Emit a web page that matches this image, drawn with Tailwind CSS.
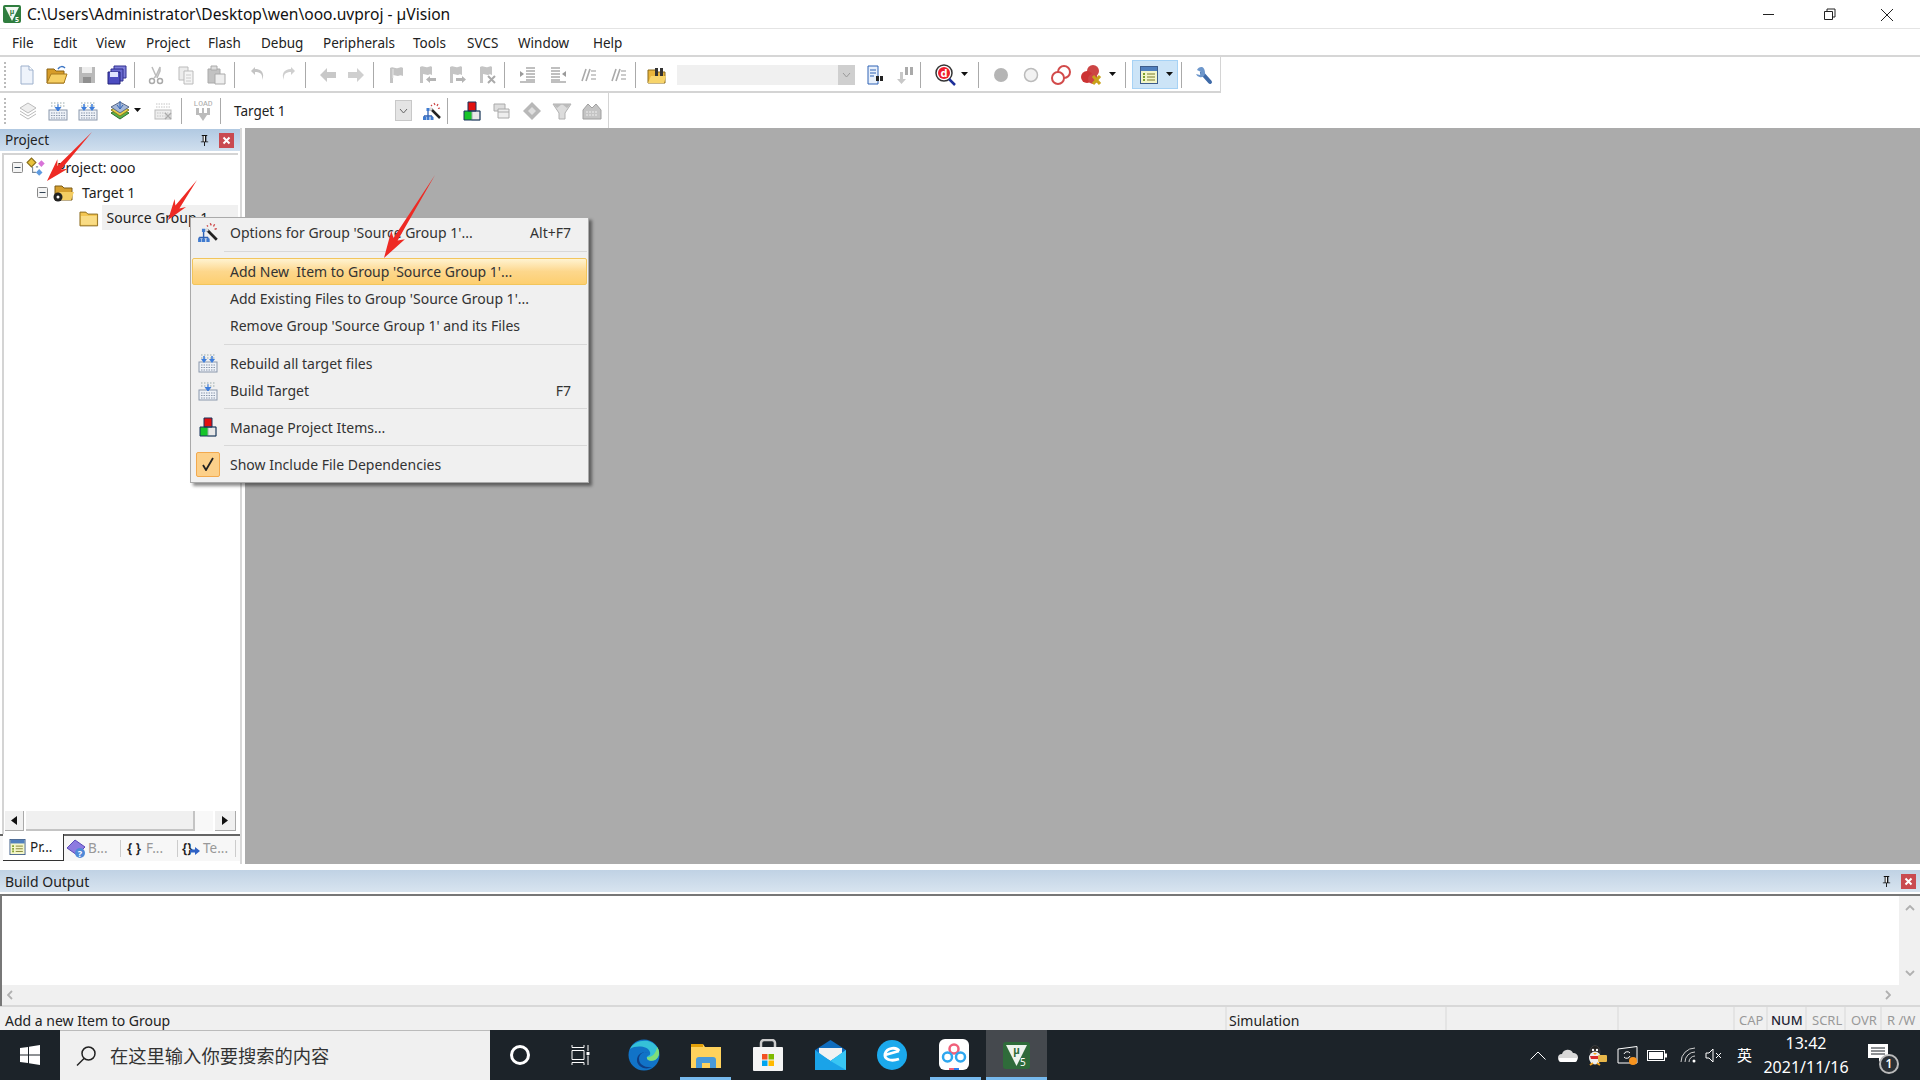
<!DOCTYPE html>
<html lang="en">
<head>
  <meta charset="UTF-8">
  <title>µVision</title>
  <script src="https://cdn.jsdelivr.net/npm/@tailwindcss/browser@4"></script>
</head>
<body class="relative w-[1920px] h-[1080px] overflow-hidden bg-white flex flex-col text-[13.500px] text-[#222] font-['Noto_Sans','Noto_Sans_CJK_SC',sans-serif]">

  <svg class="hidden">
    <symbol id="flag" viewBox="0 0 20 20"><path d="M3 3c3-2 5 1 8 0s4-1 5 0v8c-2-1-3-1-5 0-2 0-3-1-5-1v8H3z" fill="#c4c4c4"/><path d="M6 4v9" stroke="#e6e6e6"/></symbol>
    <symbol id="flagprev" viewBox="0 0 20 20"><path d="M3 2c3-2 5 1 8 0s3-1 4 0v8c-2-1-2-1-4 0-2 0-3-1-5-1v9H3z" fill="#c4c4c4"/><path d="M9 14.500l4-3.500v2h6v3h-6v2z" fill="#b4b4b4"/></symbol>
    <symbol id="flagnext" viewBox="0 0 20 20"><path d="M3 2c3-2 5 1 8 0s3-1 4 0v8c-2-1-2-1-4 0-2 0-3-1-5-1v9H3z" fill="#c4c4c4"/><path d="M19 14.500L15 11v2H9v3h6v2z" fill="#b4b4b4"/></symbol>
    <symbol id="flagclear" viewBox="0 0 20 20"><path d="M3 2c3-2 5 1 8 0s3-1 4 0v8c-2-1-2-1-4 0-2 0-3-1-5-1v9H3z" fill="#c4c4c4"/><path d="M11 11l7 7M18 11l-7 7" stroke="#aaa" stroke-width="2"/></symbol>
    <symbol id="indent" viewBox="0 0 20 20"><path d="M8 3h9M8 6h9M8 9h9M8 12h9M8 15h9M2 17h15" stroke="#aaa" stroke-width="1.300"/><path d="M2 6l4 3-4 3z" fill="#9a9a9a"/></symbol>
    <symbol id="comment" viewBox="0 0 20 20"><path d="M4 16L8 4M8 16L12 4" stroke="#aaa" stroke-width="1.600"/><path d="M13 6h5M13 10h5M13 14h5" stroke="#bbb" stroke-width="1.300"/></symbol>
    <symbol id="build" viewBox="0 0 20 20"><rect x="1" y="9" width="18" height="10" fill="#eef2f8" stroke="#8a97ab"/><path d="M3 12h14M3 14.500h14M3 17h14" stroke="#8a97ab" stroke-dasharray="1.500 1"/><path d="M3 2h14M3 5h14" stroke="#9aa" stroke-dasharray="1.500 1.500"/><path d="M10 3v5m-3-2l3 4 3-4" fill="#3d7ddc" stroke="#3d7ddc"/></symbol>
    <symbol id="rebuild" viewBox="0 0 20 20"><rect x="1" y="9" width="18" height="10" fill="#eef2f8" stroke="#8a97ab"/><path d="M3 12h14M3 14.500h14M3 17h14" stroke="#8a97ab" stroke-dasharray="1.500 1"/><path d="M3 2h14M3 5h14" stroke="#9aa" stroke-dasharray="1.500 1.500"/><path d="M6 3v4M14 3v4" stroke="#3d7ddc" stroke-width="1.500"/><path d="M3 6l3 4 3-4zM11 6l3 4 3-4z" fill="#3d7ddc"/></symbol>
    <symbol id="wand" viewBox="0 0 20 20"><path d="M9 8l9 9" stroke="#222" stroke-width="2.500"/><path d="M8 7l2 2" stroke="#ddd" stroke-width="2.500"/><path d="M12 2l1 2M16 3l-1 2M18 7l-2 .5M9 4l1 1" stroke="#c44" stroke-width="1.200"/><path d="M6 9v3M2 15h8M2 15v2M6 12v5M10 15v2" stroke="#2f62b5" stroke-width="1.300" fill="none"/><path d="M4.500 7h3v3h-3zM1 16h3v3H1zM4.500 16h3v3h-3zM8.500 16h3v3h-3z" fill="#3f7bd0"/></symbol>
    <symbol id="items" viewBox="0 0 20 20"><rect x="6" y="1" width="8" height="9" fill="#e01010"/><rect x="2" y="10" width="8" height="9" fill="#16c42a"/><rect x="10" y="10" width="8" height="9" fill="#e8e8e8" stroke="#9aa"/><path d="M6 1h8v9H6zM2 10h16v9H2z" fill="none" stroke="#16325c"/></symbol>
    <symbol id="folder" viewBox="0 0 20 20"><path d="M1 4h6l2 2h10v12H1z" fill="#f3c653" stroke="#8c6b1e"/><path d="M2 8h16v9H2z" fill="#f9dc85"/></symbol>
    <symbol id="drop" viewBox="0 0 8 5"><path d="M0 0h7L3.500 4z" fill="#111"/></symbol>
    <symbol id="pin" viewBox="0 0 12 14"><path d="M3 1h6v1H8v6h2v1H2V8h2V2H3zM5.500 9h1v4h-1z" fill="#111"/><path d="M5 2h1.500v6H5z" fill="#fff"/></symbol>
    <symbol id="close" viewBox="0 0 15 15"><rect width="15" height="15" fill="#c94a50"/><path d="M4.500 4.500l6 6M10.500 4.500l-6 6" stroke="#fff" stroke-width="2"/></symbol>
    <symbol id="minus" viewBox="0 0 11 11"><rect x=".5" y=".5" width="10" height="10" rx="1" fill="#f4f4f4" stroke="#888"/><path d="M2.500 5.500h6" stroke="#345"/></symbol>
  </svg>

  <!-- Title bar -->
  <div class="h-[29px] shrink-0 flex items-center pl-[3px] border-b border-[#e4e4e4]">
    <svg class="w-[18px] h-[18px]" viewBox="0 0 18 18"><rect width="18" height="18" rx="2" fill="#2f7d3e"/><path d="M2 2h14L9 16z" fill="#f2f7f2"/><text x="9" y="9" font-size="7" text-anchor="middle" fill="#2f7d3e" font-weight="700">µ</text><text x="12" y="16.500" font-size="7" fill="#fff" font-weight="700">5</text></svg>
    <span class="ml-[6px] pt-[2px] text-[15.600px] text-[#111]">C:\Users\Administrator\Desktop\wen\ooo.uvproj - µVision</span>
    <div class="ml-auto flex items-center -mr-[16px]">
      <svg class="w-[59px] h-[29px]" viewBox="0 0 59 29"><path d="M6 14.500h11" stroke="#222"/></svg>
      <svg class="w-[59px] h-[29px]" viewBox="0 0 59 29"><path d="M8.500 11.500h8v8h-8zM11 11.500V9h8v8h-2.500" fill="none" stroke="#222"/></svg>
      <svg class="w-[59px] h-[29px] mr-[2px]" viewBox="0 0 59 29"><path d="M6 9l12 12M18 9L6 21" stroke="#222"/></svg>
    </div>
  </div>

  <!-- Menu bar -->
  <div class="h-[28px] shrink-0 flex items-center pl-[12px] pt-[2px] border-b-2 border-[#d6d6d6] text-[#222]">
    <span class="w-[41px]">File</span>
    <span class="w-[43px]">Edit</span>
    <span class="w-[50px]">View</span>
    <span class="w-[62px]">Project</span>
    <span class="w-[53px]">Flash</span>
    <span class="w-[62px]">Debug</span>
    <span class="w-[90px]">Peripherals</span>
    <span class="w-[54px]">Tools</span>
    <span class="w-[51px]">SVCS</span>
    <span class="w-[75px]">Window</span>
    <span>Help</span>
  </div>

  <!-- Toolbar 1 -->
  <div class="h-[36px] w-[1221px] shrink-0 flex items-center border-r border-b-2 border-[#d4d4d4] pl-[4px] pt-[1px]">
    <div class="w-[2px] h-[26px] mr-[6px] border-l-2 border-dotted border-[#bbb]"></div>
    <span class="w-[30px] flex justify-center"><svg class="w-[20px] h-[20px]" viewBox="0 0 20 20"><path d="M4 1h8l4 4v14H4z" fill="#eef3fb" stroke="#9db0cc"/><path d="M12 1v4h4" fill="#fff" stroke="#9db0cc"/></svg></span>
    <span class="w-[30px] flex justify-center"><svg class="w-[22px] h-[20px]" viewBox="0 0 22 20"><path d="M1 4h7l2 2h8v12H1z" fill="#d79c28" stroke="#8a6215"/><path d="M1 18l4-9h16l-3 9z" fill="#f6cf63" stroke="#a97b1e"/><path d="M12 4c2-3 5-3 7-1" fill="none" stroke="#3a74c4" stroke-width="1.500"/></svg></span>
    <span class="w-[30px] flex justify-center"><svg class="w-[20px] h-[20px]" viewBox="0 0 20 20"><path d="M2 2h16v16H2z" fill="#b9b9b9"/><path d="M5 2h10v6H5z" fill="#eee"/><path d="M6 12h8v6H6z" fill="#8f8f8f"/></svg></span>
    <span class="w-[30px] flex justify-center"><svg class="w-[20px] h-[20px]" viewBox="0 0 20 20"><path d="M7 1h12v12H7z" fill="#7f7fd8" stroke="#2f2f8f"/><path d="M4 4h12v12H4z" fill="#6a6ad0" stroke="#2f2f8f"/><path d="M1 7h12v12H1z" fill="#4c4cc0" stroke="#22227a"/><path d="M3 7h8v5H3z" fill="#dfe3ff"/></svg></span>
    <span class="w-[1px] h-[26px] mx-[2px] bg-[#aaa]"></span>
    <span class="w-[30px] ml-[4px] flex justify-center"><svg class="w-[20px] h-[20px]" viewBox="0 0 20 20"><path d="M6 2l4 9 4-9v4l-3 7M10 11l-2 2" fill="none" stroke="#bbb" stroke-width="1.500"/><circle cx="6" cy="16" r="2.500" fill="none" stroke="#aaa" stroke-width="1.500"/><circle cx="14" cy="16" r="2.500" fill="none" stroke="#aaa" stroke-width="1.500"/></svg></span>
    <span class="w-[30px] flex justify-center"><svg class="w-[20px] h-[20px]" viewBox="0 0 20 20"><path d="M3 2h9v13H3z" fill="#ececec" stroke="#bbb"/><path d="M8 6h9v13H8z" fill="#f4f4f4" stroke="#bbb"/><path d="M10 10h5M10 13h5M10 16h5" stroke="#ccc"/></svg></span>
    <span class="w-[30px] flex justify-center"><svg class="w-[20px] h-[20px]" viewBox="0 0 20 20"><path d="M2 4h12v14H2z" fill="#c2c2c2" stroke="#aaa"/><path d="M5 1h6v4H5z" fill="#ddd" stroke="#aaa"/><path d="M9 9h10v10H9z" fill="#eee" stroke="#aaa"/></svg></span>
    <span class="w-[1px] h-[26px] ml-[3px] mr-[2px] bg-[#aaa]"></span>
    <span class="w-[30px] ml-[6px] flex justify-center"><svg class="w-[20px] h-[20px]" viewBox="0 0 20 20"><path d="M7 2L3 6l4 4V7c5 0 8 2 7 8 3-6 0-11-7-11z" fill="#c4c4c4"/></svg></span>
    <span class="w-[30px] flex justify-center"><svg class="w-[20px] h-[20px]" viewBox="0 0 20 20"><path d="M13 2l4 4-4 4V7C8 7 5 9 6 15 3 9 6 4 13 4z" fill="#cfcfcf"/></svg></span>
    <span class="w-[1px] h-[26px] mx-[2px] bg-[#aaa]"></span>
    <span class="w-[30px] ml-[5px] flex justify-center"><svg class="w-[20px] h-[20px]" viewBox="0 0 20 20"><path d="M2 10l7-7v4h9v6H9v4z" fill="#c8c8c8"/></svg></span>
    <span class="w-[30px] -ml-[2px] flex justify-center"><svg class="w-[20px] h-[20px]" viewBox="0 0 20 20"><path d="M18 10l-7-7v4H2v6h9v4z" fill="#cfcfcf"/></svg></span>
    <span class="w-[1px] h-[26px] mx-[2px] bg-[#aaa]"></span>
    <span class="w-[30px] ml-[6px] flex justify-center"><svg class="w-[20px] h-[20px]"><use href="#flag"/></svg></span>
    <span class="w-[30px] flex justify-center"><svg class="w-[20px] h-[20px]"><use href="#flagprev"/></svg></span>
    <span class="w-[30px] flex justify-center"><svg class="w-[20px] h-[20px]"><use href="#flagnext"/></svg></span>
    <span class="w-[30px] flex justify-center"><svg class="w-[20px] h-[20px]"><use href="#flagclear"/></svg></span>
    <span class="w-[1px] h-[26px] mx-[2px] bg-[#aaa]"></span>
    <span class="w-[30px] ml-[6px] flex justify-center"><svg class="w-[20px] h-[20px]"><use href="#indent"/></svg></span>
    <span class="w-[30px] flex justify-center"><svg class="w-[20px] h-[20px] -scale-x-100"><use href="#indent"/></svg></span>
    <span class="w-[30px] flex justify-center"><svg class="w-[20px] h-[20px]"><use href="#comment"/></svg></span>
    <span class="w-[30px] flex justify-center"><svg class="w-[20px] h-[20px]"><use href="#comment"/></svg></span>
    <span class="w-[1px] h-[26px] ml-[2px] mr-[6px] bg-[#aaa]"></span>
    <span class="w-[30px] flex justify-center"><svg class="w-[20px] h-[20px]" viewBox="0 0 20 20"><path d="M1 5h7l2 2h8v11H1z" fill="#e9b53c" stroke="#8a6a1a"/><path d="M8 3h3v8H8zM13 3h3v8h-3z" fill="#333"/><path d="M1 18l3-7h15l-2 7z" fill="#f7d46b"/></svg></span>
    <span class="w-[178px] h-[20px] ml-[5px] bg-[#f0f0f0] flex justify-end"><span class="w-[17px] h-full bg-[#cfcfcf] flex items-center justify-center"><svg class="w-[9px] h-[6px]" viewBox="0 0 9 6"><path d="M1 1l3.500 4L8 1" fill="none" stroke="#999"/></svg></span></span>
    <span class="w-[30px] ml-[5px] flex justify-center"><svg class="w-[20px] h-[20px]" viewBox="0 0 20 20"><path d="M3 1h10v18H3z" fill="#e8f0fb" stroke="#2f62b5"/><path d="M5 5h6M5 8h6M5 11h4" stroke="#2f62b5"/><path d="M11 11h3v5h-3zM15 11h3v5h-3z" fill="#222"/></svg></span>
    <span class="w-[30px] flex justify-center"><svg class="w-[20px] h-[20px]" viewBox="0 0 20 20"><path d="M10 2h3v8h-3zM15 2h3v8h-3z" fill="#aaa"/><path d="M5 7v7H2l4.500 5 4.500-5H8V7z" fill="#c8c8c8"/></svg></span>
    <span class="w-[1px] h-[26px] mr-[2px] bg-[#aaa]"></span>
    <span class="w-[32px] ml-[6px] flex justify-center"><svg class="w-[22px] h-[22px]" viewBox="0 0 22 22"><circle cx="10" cy="9" r="8" fill="#fff" stroke="#333" stroke-width="1.500"/><circle cx="10" cy="9" r="6" fill="#ef1c2c"/><text x="10" y="13" font-size="11" font-weight="700" text-anchor="middle" fill="#fff">d</text><path d="M15 15l6 6" stroke="#1d2f9a" stroke-width="2.500"/></svg></span>
    <svg class="w-[8px] h-[5px] mr-[9px]"><use href="#drop"/></svg>
    <span class="w-[1px] h-[26px] bg-[#aaa]"></span>
    <span class="w-[30px] ml-[7px] flex justify-center"><svg class="w-[18px] h-[18px]" viewBox="0 0 18 18"><circle cx="9" cy="9" r="7" fill="#b5b5b5"/></svg></span>
    <span class="w-[30px] flex justify-center"><svg class="w-[18px] h-[18px]" viewBox="0 0 18 18"><circle cx="9" cy="9" r="6.500" fill="#f2f2f2" stroke="#bbb" stroke-width="1.500"/></svg></span>
    <span class="w-[30px] flex justify-center"><svg class="w-[22px] h-[22px]" viewBox="0 0 22 22"><circle cx="14" cy="8" r="6" fill="#fff" stroke="#d24a4a" stroke-width="2"/><circle cx="8" cy="14" r="6" fill="#fff" stroke="#d24a4a" stroke-width="2"/></svg></span>
    <span class="w-[30px] ml-[1px] flex justify-center"><svg class="w-[24px] h-[22px]" viewBox="0 0 24 22"><circle cx="13" cy="7" r="6" fill="#c44"/><circle cx="7" cy="13" r="6" fill="#c33"/><circle cx="13" cy="15" r="5" fill="#c44"/><path d="M13 12l7 8M20 12l-7 8" stroke="#c9a21a" stroke-width="3"/></svg></span>
    <svg class="w-[8px] h-[5px] ml-[2px] mr-[8px]"><use href="#drop"/></svg>
    <span class="w-[1px] h-[26px] mr-[6px] bg-[#aaa]"></span>
    <span class="w-[46px] h-[29px] bg-[#cce4f7] border border-[#a6d2f5] flex items-center pl-[7px] gap-[8px]"><svg class="w-[18px] h-[18px]" viewBox="0 0 18 18"><rect x=".5" y=".5" width="17" height="17" fill="#f3f6c9" stroke="#3d5c8a"/><path d="M1 1h16v4H1z" fill="#4f7fbe"/><path d="M3 7h2v2H3zM3 10h2v2H3zM3 13h2v2H3z" fill="#7fa02a"/><path d="M7 8h8M7 11h8M7 14h8" stroke="#7a7a2a"/></svg><svg class="w-[8px] h-[5px]"><use href="#drop"/></svg></span>
    <span class="w-[1px] h-[26px] ml-[3px] bg-[#aaa]"></span>
    <span class="w-[30px] ml-[6px] flex justify-center"><svg class="w-[20px] h-[20px]" viewBox="0 0 20 20"><path d="M9 8L17 17" stroke="#3e6aa8" stroke-width="4" stroke-linecap="round"/><path d="M9 2a5 5 0 0 0-5 3l4 2-1 3-4-1a5 5 0 0 0 8 2c2-2 1-8-2-9z" fill="#6d97cc"/></svg></span>
  </div>

  <!-- Toolbar 2 -->
  <div class="h-[35px] w-[609px] shrink-0 flex items-center border-r border-[#d4d4d4] pl-[4px]">
    <div class="w-[2px] h-[26px] mr-[7px] border-l-2 border-dotted border-[#bbb]"></div>
    <span class="w-[30px] flex justify-center"><svg class="w-[20px] h-[20px]" viewBox="0 0 20 20"><path d="M10 2l8 5-8 5-8-5z" fill="#eee" stroke="#bbb"/><path d="M2 10l8 5 8-5M2 13l8 5 8-5" fill="none" stroke="#bbb"/></svg></span>
    <span class="w-[30px] flex justify-center"><svg class="w-[20px] h-[20px]"><use href="#build"/></svg></span>
    <span class="w-[30px] flex justify-center"><svg class="w-[20px] h-[20px]"><use href="#rebuild"/></svg></span>
    <span class="w-[30px] ml-[2px] flex justify-center"><svg class="w-[22px] h-[22px]" viewBox="0 0 22 22"><path d="M11 8l9 5-9 6-9-6z" fill="#58b04c" stroke="#2f6f2a"/><path d="M11 5l9 5-9 6-9-6z" fill="#e7cf45" stroke="#8a7a1c"/><path d="M11 2l9 5-9 6-9-6z" fill="#a5b8d8" stroke="#5a6a8a"/><path d="M11 1v7m-3-3l3 4 3-4" stroke="#2f62b5" fill="none"/></svg></span>
    <svg class="w-[8px] h-[5px] -ml-[1px]"><use href="#drop"/></svg>
    <span class="w-[30px] ml-[6px] flex justify-center"><svg class="w-[20px] h-[20px]" viewBox="0 0 20 20"><rect x="2" y="9" width="16" height="9" fill="#eee" stroke="#bbb"/><path d="M3 3h14M3 6h14M4 12h12M4 15h12" stroke="#c4c4c4" stroke-dasharray="1.500 1"/><path d="M12 12l6 6M18 12l-6 6" stroke="#aaa" stroke-width="1.500"/></svg></span>
    <span class="w-[1px] h-[26px] ml-[3px] bg-[#aaa]"></span>
    <span class="w-[30px] ml-[6px] flex flex-col items-center leading-none text-[#aaa]">
      <span class="font-['Liberation_Mono'] text-[8px]">LOAD</span>
      <svg class="w-[18px] h-[13px]" viewBox="0 0 18 13"><path d="M2 0h3v5h3V0h2v5h3V0h3v7h-3l-4 6-4-6H2z" fill="#bbb"/></svg>
    </span>
    <span class="w-[1px] h-[26px] ml-[2px] bg-[#aaa]"></span>
    <span class="w-[161px] ml-[13px] pt-[2px] text-[#222]">Target 1</span>
    <span class="w-[17px] h-[21px] bg-[#e4e4e4] border border-[#c8c8c8] flex items-center justify-center"><svg class="w-[9px] h-[6px]" viewBox="0 0 9 6"><path d="M1 1l3.500 4L8 1" fill="none" stroke="#666"/></svg></span>
    <span class="w-[30px] ml-[5px] flex justify-center"><svg class="w-[20px] h-[20px]"><use href="#wand"/></svg></span>
    <span class="w-[1px] h-[26px] mr-[9px] bg-[#aaa]"></span>
    <span class="w-[30px] flex justify-center"><svg class="w-[20px] h-[20px]"><use href="#items"/></svg></span>
    <span class="w-[30px] flex justify-center"><svg class="w-[20px] h-[20px]" viewBox="0 0 20 20"><path d="M2 3h11v7H2z" fill="#ddd" stroke="#aaa"/><path d="M6 8h11v9H6z" fill="#eee" stroke="#aaa"/><path d="M6 11h11" stroke="#aaa"/></svg></span>
    <span class="w-[30px] flex justify-center"><svg class="w-[20px] h-[20px]" viewBox="0 0 20 20"><path d="M10 1l9 9-9 9-9-9z" fill="#b8b8b8"/><path d="M10 6l4 4-4 4-4-4z" fill="#dedede"/></svg></span>
    <span class="w-[30px] flex justify-center"><svg class="w-[20px] h-[20px]" viewBox="0 0 20 20"><path d="M1 3h18l-6 9v6H7v-6z" fill="#dcdcdc" stroke="#b0b0b0"/><path d="M1 3l4 4 5-4 5 4 4-4" fill="#bbb"/></svg></span>
    <span class="w-[30px] flex justify-center"><svg class="w-[20px] h-[20px]" viewBox="0 0 20 20"><path d="M1 18V9l5-6 4 4 4-4 5 6v9z" fill="#c4c4c4" stroke="#a0a0a0"/><path d="M4 11h12M4 14h12" stroke="#eee" stroke-dasharray="2 1"/></svg></span>
  </div>

  <!-- Workspace -->
  <div class="h-[736px] shrink-0 flex">
    <div class="w-[242px] shrink-0 flex flex-col border-r-2 border-[#d8d8d8]">
      <div class="h-[22px] mt-[1px] shrink-0 flex items-center px-[5px] bg-gradient-to-b from-[#b1c9e2] to-[#d0dfee]">
        <span>Project</span>
        <svg class="w-[11px] h-[13px] ml-auto"><use href="#pin"/></svg>
        <svg class="w-[15px] h-[15px] ml-[9px] mr-[1px]"><use href="#close"/></svg>
      </div>
      <div class="flex-1 mt-[2px] mx-[2px] border-t-2 border-l-2 border-[#d4d4d4] text-[14px] flex flex-col">
        <div class="h-[25px] flex items-center pl-[8px]">
          <svg class="w-[11px] h-[11px]"><use href="#minus"/></svg>
          <svg class="w-[22px] h-[22px] ml-[3px]" viewBox="0 0 20 20"><path d="M1 5l4-4 4 4-4 4z" fill="#e8c23c" stroke="#8a6f1c"/><path d="M11 6l3-3 3 3-3 3z" fill="#d874d8"/><path d="M9 14l3-3 3 3-3 3z" fill="#5e9be0"/><path d="M6 9v5h3M11 9h-2" stroke="#789" fill="none"/></svg>
          <span class="ml-[9px]">Project: ooo</span>
        </div>
        <div class="h-[25px] flex items-center pl-[33px]">
          <svg class="w-[11px] h-[11px]"><use href="#minus"/></svg>
          <svg class="w-[22px] h-[20px] ml-[4px]" viewBox="0 0 22 20"><path d="M3 3h7l2 2h8v12H3z" fill="#d59f2e" stroke="#7d5d16"/><path d="M4 17l3-8h15l-3 8z" fill="#f4cd62"/><circle cx="6" cy="14" r="4.500" fill="#222"/><circle cx="6" cy="14" r="1.500" fill="#fff"/></svg>
          <span class="ml-[8px]">Target 1</span>
        </div>
        <div class="h-[25px] flex items-center pl-[75px]">
          <svg class="w-[20px] h-[20px]"><use href="#folder"/></svg>
          <span class="ml-[3px] pl-[5px] h-full w-[139px] bg-[#f0f0f0] flex items-center">Source Group 1</span>
        </div>

        <!-- Horizontal scrollbar -->
        <div class="mt-auto mb-[3px] h-[20px] flex gap-[2px] pl-[1px] pr-[2px]">
          <span class="w-[19px] bg-[#f0f0f0] border-r border-b border-[#aaa] flex items-center justify-center"><svg class="w-[6px] h-[9px]" viewBox="0 0 6 9"><path d="M6 0v9L0 4.500z" fill="#111"/></svg></span>
          <span class="w-[172px] bg-[#f0f0f0] border-r-2 border-b-2 border-[#c4c4c4]"></span>
          <span class="w-[19px] -ml-[2px] bg-[#f8f8f8]"></span>
          <span class="w-[21px] bg-[#f0f0f0] border-r border-b border-[#aaa] flex items-center justify-center"><svg class="w-[6px] h-[9px]" viewBox="0 0 6 9"><path d="M0 0v9l6-4.500z" fill="#111"/></svg></span>
        </div>
      </div>
      <!-- Panel tabs -->
      <div class="h-[27px] shrink-0 border-t-2 border-[#666] flex items-stretch bg-[#f7f7f7] text-[#999] mb-[3px]">
        <div class="w-[61px] ml-[3px] -mt-[2px] bg-white border-r border-b border-[#333] flex items-center pl-[6px] gap-[4px] text-[#222]">
          <svg class="w-[17px] h-[16px]" viewBox="0 0 18 18"><rect x=".5" y=".5" width="17" height="17" fill="#f3f6c9" stroke="#3d5c8a"/><path d="M1 1h16v4H1z" fill="#4f7fbe"/><path d="M3 7h2v2H3zM3 10h2v2H3zM3 13h2v2H3z" fill="#7fa02a"/><path d="M7 8h8M7 11h8M7 14h8" stroke="#7a7a2a"/></svg>Pr...
        </div>
        <div class="w-[57px] flex items-center pl-[2px] gap-[2px] border-r border-[#ccc] my-[4px]">
          <svg class="w-[20px] h-[20px]" viewBox="0 0 20 20"><path d="M1 9l8-8 10 7-8 8z" fill="#8d7be0" stroke="#5a49b8"/><circle cx="14" cy="14" r="5" fill="#4f8ad8"/><text x="14" y="17.500" font-size="9" font-weight="700" text-anchor="middle" fill="#fff">?</text></svg>B...
        </div>
        <div class="w-[57px] flex items-center pl-[6px] gap-[5px] border-r border-[#ccc] my-[4px]">
          <span class="text-[#222] font-semibold">{ }</span>F...
        </div>
        <div class="w-[58px] flex items-center pl-[4px] gap-[2px] border-r border-[#ccc] my-[4px]">
          <span class="relative text-[#222] font-semibold w-[19px]">{}<svg class="absolute left-[8px] top-[9px] w-[10px] h-[8px]" viewBox="0 0 10 8"><path d="M0 2.500h5V0l5 4-5 4V5.500H0z" fill="#2f62c5"/></svg></span>Te...
        </div>
      </div>
    </div>
    <div class="flex-1 ml-[3px] bg-[#ababab]"></div>
  </div>

  <!-- Build Output -->
  <div class="h-[6px] shrink-0"></div>
  <div class="h-[22px] shrink-0 flex items-center px-[5px] text-[14px] bg-gradient-to-b from-[#c0d2e4] to-[#d8e4ef]">
    <span>Build Output</span>
    <svg class="w-[11px] h-[13px] ml-auto"><use href="#pin"/></svg>
    <svg class="w-[15px] h-[15px] ml-[9px] -mr-[1px]"><use href="#close"/></svg>
  </div>
  <div class="h-[112px] shrink-0 mt-[2px] border-t-2 border-[#777] border-l-2 flex flex-col">
    <div class="flex-1 flex">
      <div class="flex-1 bg-white"></div>
      <div class="w-[21px] bg-[#f0f0f0] flex flex-col items-center justify-between py-[9px]">
        <svg class="w-[10px] h-[6px]" viewBox="0 0 10 6"><path d="M1 5l4-4 4 4" fill="none" stroke="#b0b0b0" stroke-width="1.800"/></svg>
        <svg class="w-[10px] h-[6px]" viewBox="0 0 10 6"><path d="M1 1l4 4 4-4" fill="none" stroke="#b0b0b0" stroke-width="1.800"/></svg>
      </div>
    </div>
    <div class="h-[21px] bg-[#f0f0f0] flex items-center justify-between pl-[5px] pr-[29px] border-b border-[#d8d8d8]">
      <svg class="w-[6px] h-[10px]" viewBox="0 0 6 10"><path d="M5 1L1 5l4 4" fill="none" stroke="#b0b0b0" stroke-width="1.800"/></svg>
      <svg class="w-[6px] h-[10px]" viewBox="0 0 6 10"><path d="M1 1l4 4-4 4" fill="none" stroke="#b0b0b0" stroke-width="1.800"/></svg>
    </div>
  </div>

  <!-- Status bar -->
  <div class="h-[24px] shrink-0 flex items-center bg-[#f0f0f0] text-[14px] border-t border-[#d8d8d8]">
    <span class="w-[1225px] pl-[5px] pt-[4px]">Add a new Item to Group</span>
    <span class="w-[220px] h-full pl-[2px] pt-[4px] flex items-center border-l-2 border-[#e4e4e4]">Simulation</span>
    <span class="w-[172px] h-full border-l-2 border-[#e4e4e4]"></span>
    <span class="w-[116px] h-full border-l-2 border-[#e4e4e4]"></span>
    <div class="flex-1 h-full flex items-center text-[13px] text-[#999]">
      <span class="w-[33px] h-full flex items-center border-l-2 border-[#e4e4e4] pl-[4px] pt-[4px]">CAP</span>
      <span class="w-[39px] h-full flex items-center border-l-2 border-[#e4e4e4] pl-[3px] pt-[4px] text-[#223] font-medium">NUM</span>
      <span class="w-[39px] h-full flex items-center border-l-2 border-[#e4e4e4] pl-[5px] pt-[4px]">SCRL</span>
      <span class="w-[36px] h-full flex items-center border-l-2 border-[#e4e4e4] pl-[5px] pt-[4px]">OVR</span>
      <span class="h-full flex items-center border-l-2 border-[#e4e4e4] pl-[5px] pt-[4px] whitespace-nowrap">R /W</span>
    </div>
  </div>

  <!-- Taskbar -->
  <div class="h-[50px] shrink-0 flex items-center bg-[#1c2329] text-white">
    <div class="w-[60px] h-full flex items-center justify-center">
      <svg class="w-[20px] h-[20px]" viewBox="0 0 20 20"><path d="M0 3l8-1v7.500H0zM9 1.800L20 0v9.500H9zM0 10.500h8V18l-8-1zM9 10.500h11V20L9 18.200z" fill="#fff"/></svg>
    </div>
    <div class="w-[430px] h-full bg-[#f0f0f0] flex items-center pl-[15px] text-[#333] text-[18.300px] border-t border-[#bbb]">
      <svg class="w-[22px] h-[22px]" viewBox="0 0 22 22"><circle cx="13.500" cy="8.500" r="6.500" fill="none" stroke="#222" stroke-width="1.500"/><path d="M9 13.500L2 20.500" stroke="#222" stroke-width="1.500"/></svg>
      <span class="ml-[13px]">在这里输入你要搜索的内容</span>
    </div>
    <div class="w-[60px] flex justify-center"><span class="w-[20px] h-[20px] rounded-full border-[3px] border-white"></span></div>
    <div class="w-[60px] flex justify-center">
      <svg class="w-[20px] h-[20px]" viewBox="0 0 20 20"><path d="M2 0v2.500h12V0M2 20v-2.500h12V20M2 5.500h12v9H2zM18 0v6M18 10.500V20" fill="none" stroke="#fff"/><rect x="16.500" y="7" width="3" height="3" fill="#fff"/></svg>
    </div>
    <div class="w-[62px] ml-[3px] h-full flex items-center justify-center">
      <svg class="w-[32px] h-[32px]" viewBox="0 0 32 32"><circle cx="16" cy="16" r="15.500" fill="#1173c7"/><path d="M2 10C6 1 22-2 29 8c3 4 3 10-2 13-4 2-9 0-8-3 1-2 4-1 3-5-2-6-14-7-20-3z" fill="#35c1d8"/><path d="M29 8c3 4 3 10-2 13-4 2-9 0-8-3 3 1 9-2 10-10z" fill="#7ede7a"/><path d="M11 20c0-5 5-8 9-6-4-2-10 0-11 6-1 7 8 12 15 8-6 1-13-2-13-8z" fill="#0f3f86"/></svg>
    </div>
    <div class="w-[62px] h-full flex items-center justify-center relative">
      <svg class="w-[30px] h-[26px]" viewBox="0 0 30 26"><path d="M0 2h12l2 3h16v21H0z" fill="#ffd25c"/><path d="M0 2h12v3H0z" fill="#e3a008"/><path d="M5 26v-8a3 3 0 0 1 3-3h14a3 3 0 0 1 3 3v8h-6v-5h-8v5z" fill="#4a9ad8"/></svg>
      <span class="absolute bottom-0 left-[5px] right-[6px] h-[3px] bg-[#76b9ed]"></span>
    </div>
    <div class="w-[62px] flex justify-center">
      <svg class="w-[30px] h-[32px]" viewBox="0 0 30 32"><path d="M8 8V4a3 3 0 0 1 3-3h8a3 3 0 0 1 3 3v4" fill="none" stroke="#ccc" stroke-width="2.500"/><rect y="8" width="30" height="24" rx="1" fill="#f4f4f4"/><path d="M9 15h5.500v5.500H9z" fill="#f25022"/><path d="M15.500 15H21v5.500h-5.500z" fill="#7fba00"/><path d="M9 21.500h5.500V27H9z" fill="#00a4ef"/><path d="M15.500 21.500H21V27h-5.500z" fill="#ffb900"/></svg>
    </div>
    <div class="w-[62px] flex justify-center">
      <svg class="w-[31px] h-[30px]" viewBox="0 0 31 30"><path d="M0 10L15.500 0 31 10v20H0z" fill="#0f6cbd"/><path d="M4 8h23v6l-11.500 7L4 14z" fill="#f2f2f2"/><path d="M0 10l15.500 11L31 10v20H0z" fill="#1aa3e8"/><path d="M15.500 21L31 10v20z" fill="#38c6f4"/></svg>
    </div>
    <div class="w-[62px] flex justify-center">
      <svg class="w-[30px] h-[30px]" viewBox="0 0 30 30"><circle cx="15" cy="15" r="15" fill="#1ba9ec"/><path d="M22 11c-2-4-12-4-14 3-1 5 5 8 14 5M8 15l14-4" fill="none" stroke="#fff" stroke-width="2.800"/></svg>
    </div>
    <div class="w-[62px] h-full flex items-center justify-center relative">
      <svg class="w-[30px] h-[32px]" viewBox="0 0 30 32"><rect width="30" height="31" rx="6" fill="#fff"/><circle cx="15" cy="10" r="4.500" fill="none" stroke="#f0607a" stroke-width="2.500"/><circle cx="8.500" cy="18" r="4.500" fill="none" stroke="#2ea7ef" stroke-width="2.500"/><circle cx="21.500" cy="18" r="4.500" fill="none" stroke="#2ea7ef" stroke-width="2.500"/><path d="M10 29h5v2h-5z" fill="#f0607a"/><path d="M15 29h5v2h-5z" fill="#2e7fef"/></svg>
      <span class="absolute bottom-0 left-[7px] right-[4px] h-[3px] bg-[#76b9ed]"></span>
    </div>
    <div class="w-[61px] ml-[1px] h-full bg-[#45494e] flex items-center justify-center relative">
      <svg class="w-[27px] h-[27px]" viewBox="0 0 27 27"><rect width="27" height="27" rx="3" fill="#2f6b3a"/><path d="M3 3h21L13.500 24z" fill="#eef4ee"/><text x="13.500" y="12" font-size="10" text-anchor="middle" fill="#2f6b3a" font-weight="700">µ</text><text x="17" y="24" font-size="10" fill="#fff">5</text></svg>
      <span class="absolute bottom-0 left-0 right-0 h-[3px] bg-[#76b9ed]"></span>
    </div>

    <!-- Tray -->
    <div class="ml-auto flex items-center h-full mr-[15px]">
      <svg class="w-[16px] h-[9px]" viewBox="0 0 16 9"><path d="M.5 8.500L8 1l7.500 7.500" fill="none" stroke="#fff"/></svg>
      <svg class="w-[20px] h-[14px] ml-[12px]" viewBox="0 0 20 14"><path d="M4 14a4 4 0 0 1 0-8 6 6 0 0 1 11-1 4.500 4.500 0 0 1 1 9z" fill="#d8d8d8"/><path d="M1 10h18v2a2 2 0 0 1-2 2H3a2 2 0 0 1-2-2z" fill="#fff"/></svg>
      <svg class="w-[20px] h-[21px] ml-[9px]" viewBox="0 0 20 21"><ellipse cx="8" cy="7" rx="5" ry="6.500" fill="#222" stroke="#555" stroke-width=".5"/><ellipse cx="8" cy="13" rx="6" ry="6.500" fill="#eee"/><circle cx="6" cy="5" r="1.200" fill="#fff"/><circle cx="10" cy="5" r="1.200" fill="#fff"/><path d="M6 8h4l-2 2z" fill="#f3a31c"/><path d="M3 11h10l-1 3H4z" fill="#d92b2b"/><path d="M3 20l3-2M13 20l-3-2" stroke="#f3a31c" stroke-width="2"/><rect x="11" y="10" width="9" height="7" rx="1" fill="#e8b74a"/></svg>
      <svg class="w-[21px] h-[19px] ml-[10px]" viewBox="0 0 21 19"><path d="M1 3l19-2.500V17H1z" fill="none" stroke="#fff"/><path d="M7 8a3.500 3.500 0 0 1 6-1M13 10a3.500 3.500 0 0 1-6 1" fill="none" stroke="#fff"/><circle cx="16" cy="15" r="4" fill="#f7931e"/></svg>
      <svg class="w-[20px] h-[11px] ml-[9px]" viewBox="0 0 20 11"><rect x=".5" y=".5" width="17" height="10" fill="none" stroke="#fff"/><rect x="2" y="2" width="14" height="7" fill="#fff"/><rect x="18" y="3.500" width="2" height="4" fill="#fff"/></svg>
      <svg class="w-[16px] h-[16px] ml-[13px]" viewBox="0 0 16 16"><path d="M1 15A14 14 0 0 1 15 1M5 15A10 10 0 0 1 15 5M9 15a6 6 0 0 1 6-6" fill="none" stroke="#cfcfcf"/><circle cx="14" cy="14" r="1.500" fill="#fff"/></svg>
      <svg class="w-[19px] h-[15px] ml-[9px]" viewBox="0 0 19 15"><path d="M1 5h3l4-4v13l-4-4H1z" fill="none" stroke="#fff"/><path d="M11 5l5 5M16 5l-5 5" stroke="#fff"/></svg>
      <span class="ml-[13px] text-[15px] w-[18px]">英</span>
      <div class="w-[96px] ml-[3px] flex flex-col items-center text-[16px] leading-[24px]">
        <span>13:42</span>
        <span>2021/11/16</span>
      </div>
      <div class="w-[48px] ml-[3px] relative h-full flex items-center justify-center">
        <svg class="w-[20px] h-[18px] -ml-[6px] -mt-[5px]" viewBox="0 0 20 18"><path d="M0 0h20v14h-6l-3 4v-4H0z" fill="#fff"/><path d="M3 4h14M3 7h14M3 10h14" stroke="#1c2329"/></svg>
        <span class="absolute left-[22px] top-[24px] w-[20px] h-[20px] rounded-full bg-[#2b3035] border-2 border-[#bbb] flex items-center justify-center text-[12px] font-semibold">1</span>
      </div>
    </div>
  </div>

  <!-- Context menu -->
  <div class="absolute left-[190px] top-[217px] w-[399px] h-[266px] bg-[#f0f0f0] border border-[#aaa] shadow-[3px_3px_3px_rgba(0,0,0,0.45)] flex flex-col px-[1px] text-[14px] text-[#333]">
    <div class="h-[28px] flex items-center"><span class="w-[38px] pr-[6px] flex justify-center"><svg class="w-[22px] h-[22px]"><use href="#wand"/></svg></span><span>Options for Group 'Source Group 1'...</span><span class="ml-auto mr-[16px]">Alt+F7</span></div>
    <div class="h-px ml-[32px] mt-[5px] bg-[#d8d8d8]"></div>
    <div class="h-[27px] mt-[6px] flex items-center pl-[38px] rounded-[2px] border border-[#f2c55c] bg-gradient-to-b from-[#fff3d0] via-[#fdd78c] to-[#fdcf70]"><span class="-ml-px -mt-px">Add New&nbsp; Item to Group 'Source Group 1'...</span></div>
    <div class="h-[27px] flex items-center pl-[38px]">Add Existing Files to Group 'Source Group 1'...</div>
    <div class="h-[27px] flex items-center pl-[38px]">Remove Group 'Source Group 1' and its Files</div>
    <div class="h-px ml-[32px] mt-[5px] bg-[#d8d8d8]"></div>
    <div class="h-[28px] mt-[4px] flex items-center"><span class="w-[38px] pr-[6px] flex justify-center"><svg class="w-[20px] h-[20px]"><use href="#rebuild"/></svg></span>Rebuild all target files</div>
    <div class="h-[27px] flex items-center"><span class="w-[38px] pr-[6px] flex justify-center"><svg class="w-[20px] h-[20px]"><use href="#build"/></svg></span><span>Build Target</span><span class="ml-auto mr-[16px]">F7</span></div>
    <div class="h-px ml-[32px] mt-[4px] bg-[#d8d8d8]"></div>
    <div class="h-[28px] mt-[4px] flex items-center"><span class="w-[38px] pr-[6px] flex justify-center"><svg class="w-[20px] h-[20px]"><use href="#items"/></svg></span>Manage Project Items...</div>
    <div class="h-px ml-[32px] mt-[4px] bg-[#d8d8d8]"></div>
    <div class="h-[28px] mt-[4px] flex items-center"><span class="w-[38px] pr-[6px] flex justify-center"><span class="w-[24px] h-[25px] rounded-[2px] bg-[#fcd08a] border border-[#f2a94e] flex items-center justify-center"><svg class="w-[12px] h-[14px]" viewBox="0 0 12 14"><path d="M1 8l3 5L11 1" fill="none" stroke="#222" stroke-width="1.800"/></svg></span></span>Show Include File Dependencies</div>
  </div>

  <!-- Red annotation arrows -->
  <svg class="absolute inset-0 w-[1920px] h-[1080px] pointer-events-none" viewBox="0 0 1920 1080">
    <path d="M92 132L61 169.400L67.800 168.700L47 181L57.400 159.300L57.400 166Z" fill="#ee2a24"/>
    <path d="M197 180L179.400 208.500L186 207.100L168 220L174.600 198.900L175.400 205.500Z" fill="#ee2a24"/>
    <path d="M435 175L397.600 240.600L404.900 239.200L384 258L391.300 230.800L393.400 238Z" fill="#ee2a24"/>
  </svg>
</body>
</html>
